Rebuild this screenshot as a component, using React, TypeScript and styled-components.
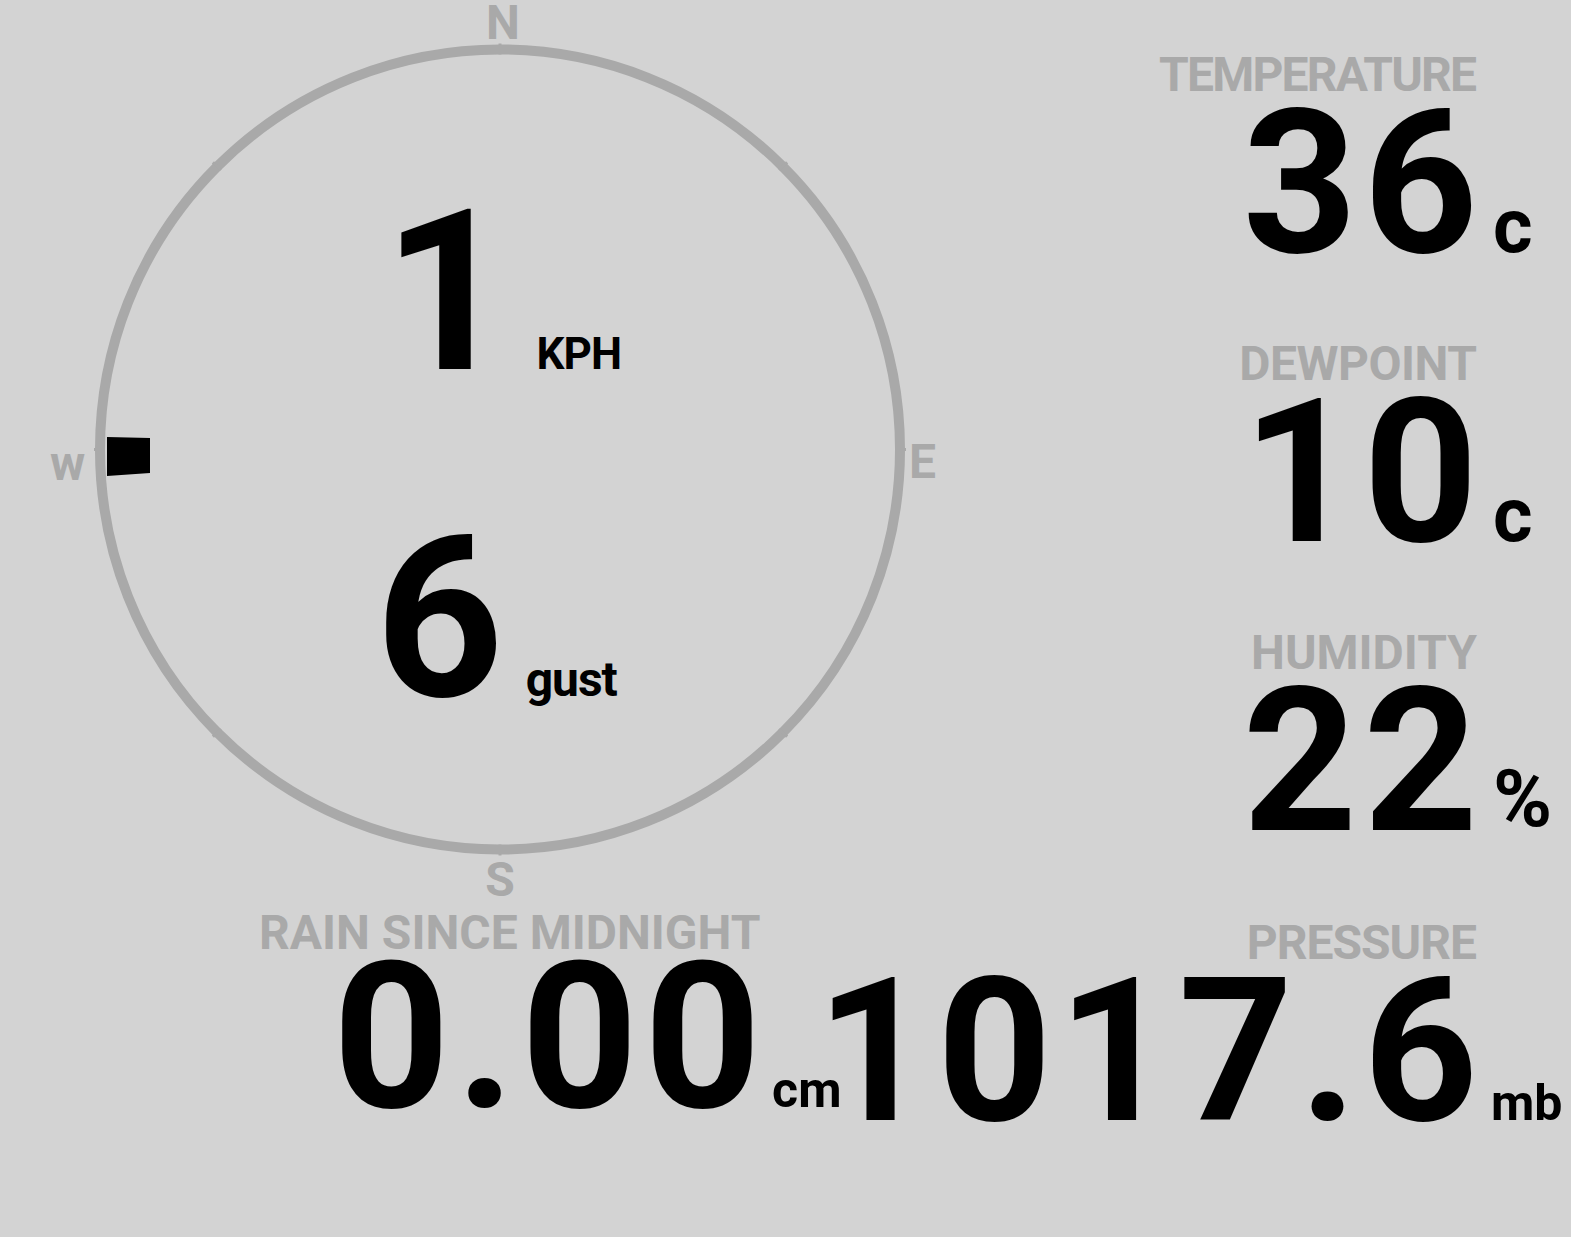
import styled, { createGlobalStyle } from "styled-components";

const GlobalStyle = createGlobalStyle`
  html, body {
    margin: 0;
    padding: 0;
    background-color: #d3d3d3;
  }
  body {
    font-family: Roboto, "Liberation Sans", sans-serif;
    font-weight: 700;
    overflow: hidden;
  }
`;

const Page = styled.main`
  display: flex;
  width: 1571px;
  height: 1237px;
  background-color: #d3d3d3;
  color: #000;
`;

const LeftPanel = styled.section`
  flex: 0 0 1000px;
  display: flex;
  flex-direction: column;
  align-items: flex-start;
`;

const RightPanel = styled.section`
  flex: 1;
  min-width: 0;
  display: flex;
  flex-direction: column;
  padding-top: 51px;
`;

const Compass = styled.div`
  position: relative;
  width: 1000px;
  height: 909px;
`;

const Rose = styled.svg`
  position: absolute;
  top: 0;
  left: 0;
`;

const Point = styled.span<{ $top: number; $left: number; $center?: boolean }>`
  position: absolute;
  top: ${(p) => p.$top}px;
  left: ${(p) => p.$left}px;
  transform: ${(p) => (p.$center ? "translateX(-50%)" : "none")};
  font-size: 48px;
  line-height: 1;
  color: #a9a9a9;
`;

const Speeds = styled.div`
  position: relative;
  display: flex;
  flex-direction: column;
  align-items: center;
  gap: 103px;
  padding-top: 181px;
`;

const SpeedRow = styled.div<{ $gap: number; $shift: number }>`
  display: flex;
  align-items: baseline;
  gap: ${(p) => p.$gap}px;
  margin-left: ${(p) => p.$shift}px;
`;

const BigDigit = styled.span`
  font-size: 224px;
  line-height: 1;
`;

const SpeedUnit = styled.span<{ $size: number }>`
  font-size: ${(p) => p.$size}px;
  line-height: 1;
  letter-spacing: -1px;
`;

const Stat = styled.div<{ $unitSpace: number; $fit?: boolean; $indent?: number }>`
  display: flex;
  flex-direction: column;
  width: ${(p) => (p.$fit ? "fit-content" : "auto")};
  margin-left: ${(p) => p.$indent ?? 0}px;
  padding-bottom: 76px;
  --unit-space: ${(p) => p.$unitSpace}px;
`;

const Label = styled.div<{ $track?: number }>`
  font-size: 48px;
  line-height: 1;
  letter-spacing: ${(p) => p.$track ?? 0}px;
  color: #a9a9a9;
  text-align: right;
  white-space: nowrap;
  padding-right: calc(var(--unit-space) + ${(p) => 1 - (p.$track ?? 0)}px);
`;

const ValueRow = styled.div<{ $gap: number }>`
  display: flex;
  justify-content: flex-end;
  align-items: baseline;
  margin-top: ${(p) => p.$gap}px;
`;

const Value = styled.span<{ $size: number; $track: number }>`
  font-size: ${(p) => p.$size}px;
  line-height: 150px;
  letter-spacing: ${(p) => p.$track}px;
  margin-right: ${(p) => -p.$track}px;
  white-space: nowrap;
`;

const Unit = styled.span<{ $size: number; $pad: number; $lift?: number }>`
  flex: 0 0 var(--unit-space);
  box-sizing: border-box;
  padding-left: ${(p) => p.$pad}px;
  font-size: ${(p) => p.$size}px;
  line-height: 1;
  white-space: nowrap;
  position: relative;
  top: ${(p) => -(p.$lift ?? 0)}px;
`;

const CX = 500;
const CY = 449.5;
const R = 400;

function CompassRose() {
  const ticks = [0, 45, 90, 135, 180, 225, 270, 315].map((deg) => {
    const a = (deg * Math.PI) / 180;
    const x1 = CX + Math.sin(a) * (R - 5);
    const y1 = CY - Math.cos(a) * (R - 5);
    const x2 = CX + Math.sin(a) * (R + 6);
    const y2 = CY - Math.cos(a) * (R + 6);
    return <line key={deg} x1={x1} y1={y1} x2={x2} y2={y2} stroke="#a9a9a9" strokeWidth={3} />;
  });

  return (
    <Rose width={1000} height={909} viewBox="0 0 1000 909">
      <circle cx={CX} cy={CY} r={R} fill="none" stroke="#a9a9a9" strokeWidth={10} />
      {ticks}
      <polygon points="107,437 150,438 150,473 107,476" fill="#000" />
    </Rose>
  );
}

const stats = [
  { label: "TEMPERATURE", track: -1.8, value: "36", unit: "c", unitSize: 76, lift: 0 },
  { label: "DEWPOINT", track: -0.5, value: "10", unit: "c", unitSize: 76, lift: 0 },
  { label: "HUMIDITY", track: 0, value: "22", unit: "%", unitSize: 80, lift: 4 },
  { label: "PRESSURE", track: -1, value: "1017.6", unit: "mb", unitSize: 50, lift: 0 },
];

function App() {
  return (
    <>
      <GlobalStyle />
      <Page>
        <LeftPanel>
          <Compass>
            <CompassRose />
            <Point $top={-1} $left={503} $center>N</Point>
            <Point $top={438} $left={909}>E</Point>
            <Point $top={856} $left={500} $center>S</Point>
            <Point $top={440} $left={50}>w</Point>
            <Speeds>
              <SpeedRow $gap={25} $shift={4}>
                <BigDigit>1</BigDigit>
                <SpeedUnit $size={44}>KPH</SpeedUnit>
              </SpeedRow>
              <SpeedRow $gap={22} $shift={-8}>
                <BigDigit>6</BigDigit>
                <SpeedUnit $size={48}>gust</SpeedUnit>
              </SpeedRow>
            </Speeds>
          </Compass>
          <Stat $unitSpace={80} $fit $indent={259}>
            <Label>RAIN SINCE MIDNIGHT</Label>
            <ValueRow $gap={6}>
              <Value $size={204} $track={6}>0.00</Value>
              <Unit $size={50} $pad={11}>cm</Unit>
            </ValueRow>
          </Stat>
        </LeftPanel>
        <RightPanel>
          {stats.map((s) => (
            <Stat key={s.label} $unitSpace={93}>
              <Label $track={s.track}>{s.label}</Label>
              <ValueRow $gap={10}>
                <Value $size={200} $track={6}>{s.value}</Value>
                <Unit $size={s.unitSize} $pad={s.unit === "mb" ? 13 : 15} $lift={s.lift}>
                  {s.unit}
                </Unit>
              </ValueRow>
            </Stat>
          ))}
        </RightPanel>
      </Page>
    </>
  );
}

export default App;
